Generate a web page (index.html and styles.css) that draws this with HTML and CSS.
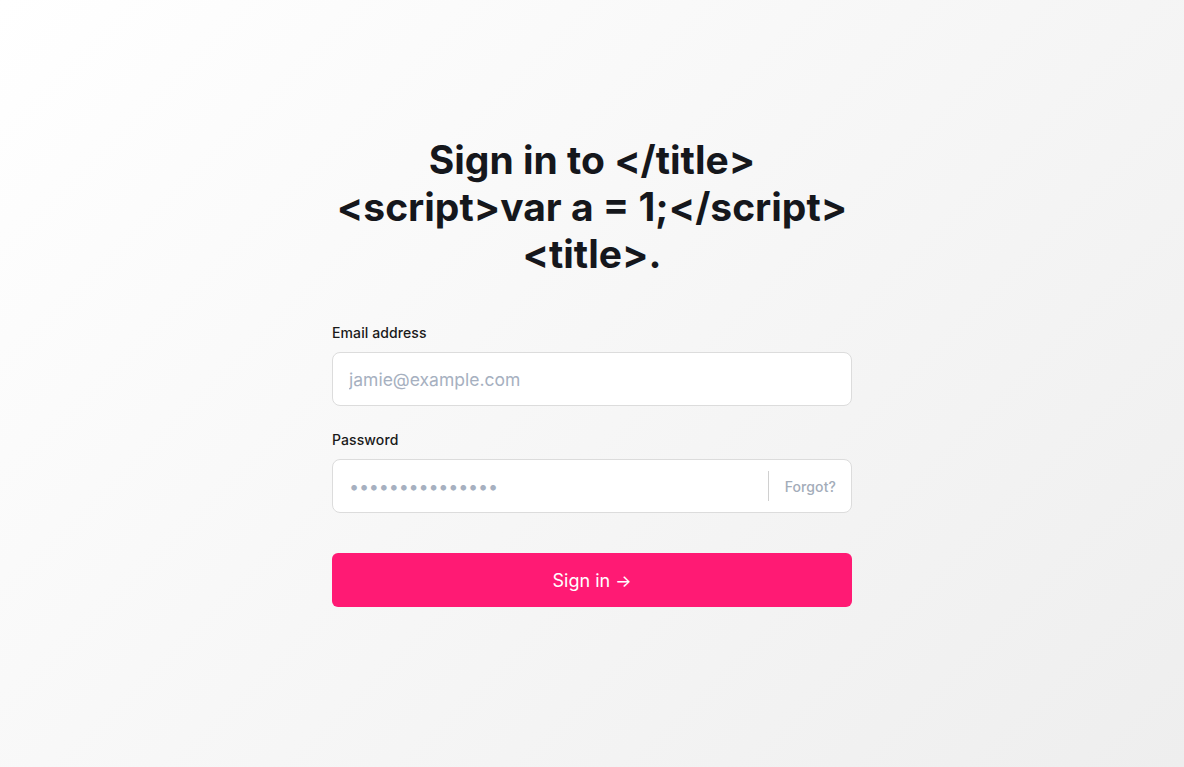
FILE: index.html
```html
<!DOCTYPE html>
<html lang="en">
<head>
<meta charset="utf-8">
<title>Sign in</title>
<link rel="stylesheet" href="styles.css">
</head>
<body>
<main class="page">
  <div class="card">
    <h1 class="title">Sign in to &lt;/title&gt;<br>&lt;script&gt;var a = 1;&lt;/script&gt;<br>&lt;title&gt;.</h1>
    <form class="form">
      <label class="label" for="email">Email address</label>
      <div class="field">
        <input class="input" id="email" type="email" placeholder="jamie@example.com">
      </div>
      <label class="label" for="pw">Password</label>
      <div class="field field-pw">
        <input class="input" id="pw" type="password" value="passwordpasswor">
        <span class="divider"></span>
        <a class="forgot" href="#">Forgot?</a>
      </div>
      <button class="btn" type="button">Sign in <span class="arrow">&rarr;</span></button>
    </form>
  </div>
</main>
</body>
</html>
```
FILE: styles.css
```css
* { box-sizing: border-box; }
html, body { margin: 0; height: 100%; }
body {
  font-family: Inter, "Noto Sans", sans-serif;
  background: linear-gradient(135deg, #ffffff 0%, #eeeeee 100%);
  color: #16181d;
}
.page {
  min-height: 100%;
  display: flex;
  align-items: center;
  justify-content: center;
  padding-bottom: 24px;
}
.card { width: 520px; }
.title {
  margin: 0 0 46px;
  text-align: center;
  font-size: 39px;
  line-height: 47px;
  font-weight: 700;
  letter-spacing: 0;
  color: #15171c;
}
.form { display: flex; flex-direction: column; }
.label {
  font-size: 14px;
  font-weight: 500;
  line-height: 20px;
  color: #1a1a1a;
  letter-spacing: 0.1px;
  margin-bottom: 9px;
}
.field {
  display: flex;
  align-items: center;
  height: 54px;
  background: #fff;
  border: 1px solid #dcdcdc;
  border-radius: 8px;
  margin-bottom: 24px;
}
.input {
  flex: 1;
  height: 100%;
  border: 0;
  outline: none;
  background: transparent;
  padding: 0 16px;
  font-family: inherit;
  font-size: 17.5px;
  color: #a0aab8;
}
.input::placeholder { color: #a6b0c0; }
#pw { font-size: 18px; letter-spacing: -0.2px; color: #a6b0c0; }
.divider {
  width: 1px;
  height: 30px;
  background: #d0d0d0;
  margin-right: 16px;
}
.forgot {
  font-size: 14px;
  font-weight: 500;
  color: #a3acb9;
  text-decoration: none;
  margin-right: 15px;
  letter-spacing: 0.1px;
}
.btn {
  margin-top: 16px;
  height: 54px;
  border: 0;
  border-radius: 6px;
  background: #ff1a74;
  color: #fff;
  font-family: inherit;
  font-size: 18px;
  font-weight: 400;
  cursor: pointer;
}
.arrow { font-size: 17px; }
```
